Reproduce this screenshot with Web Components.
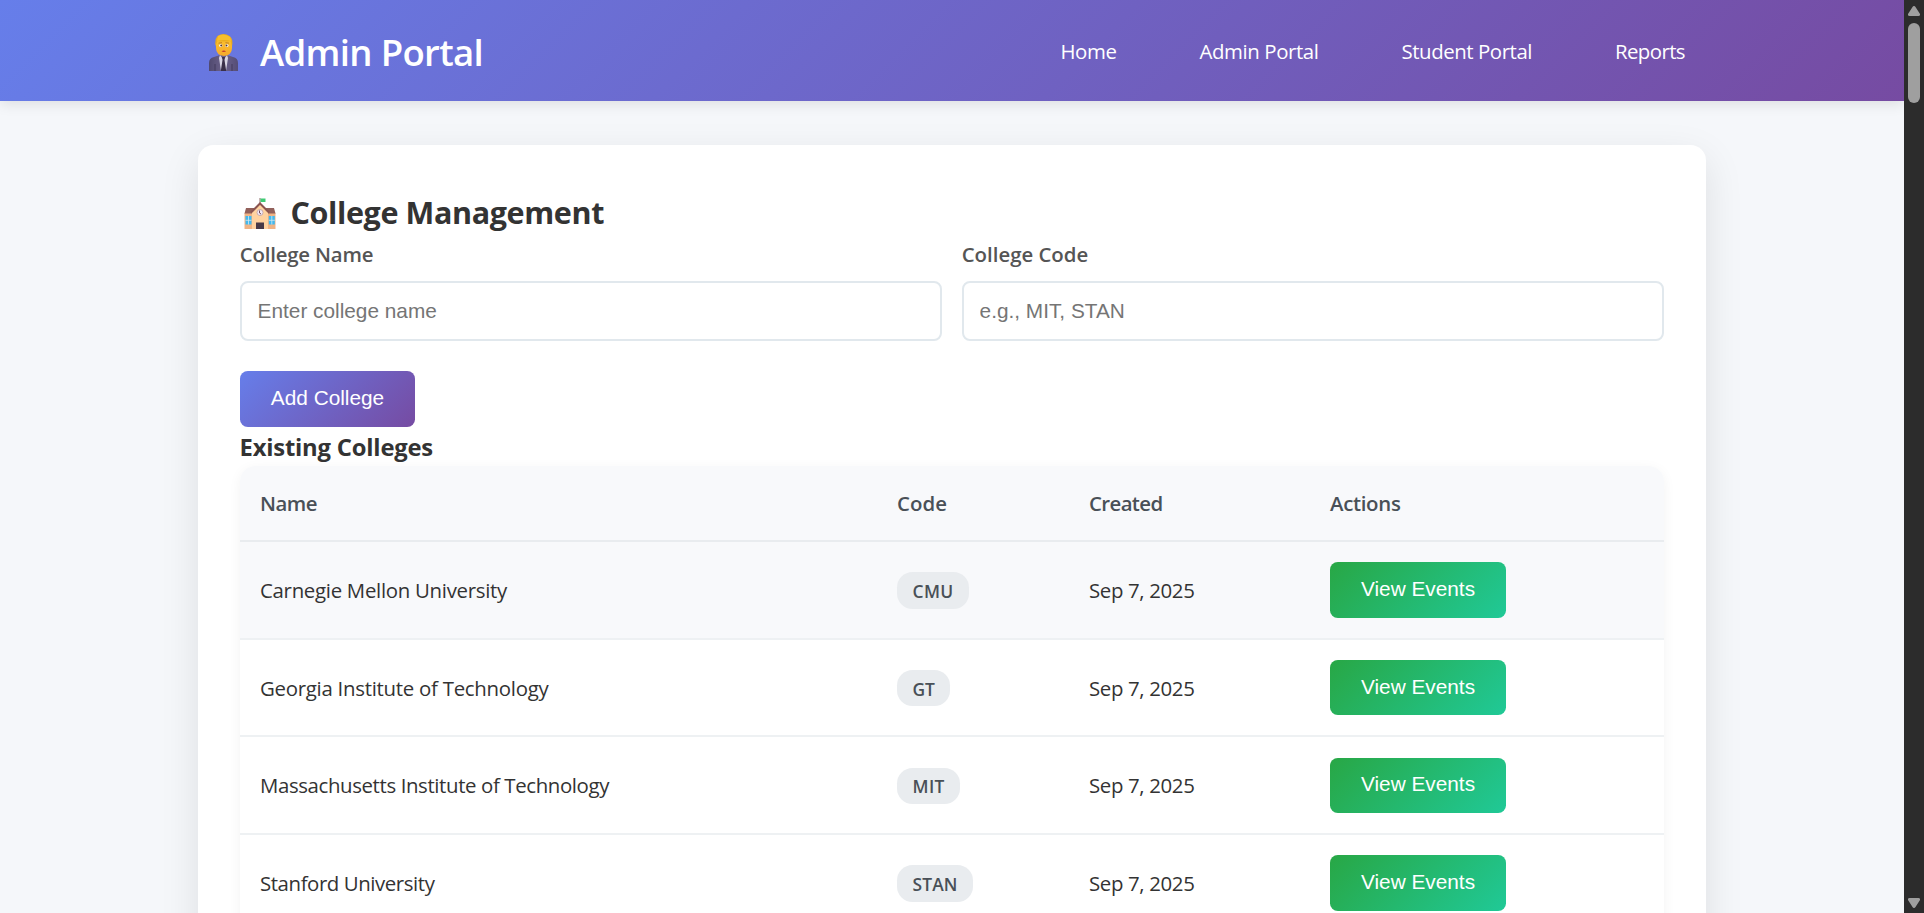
<!DOCTYPE html>
<html lang="en">
<head>
<meta charset="utf-8">
<title>Admin Portal</title>
<style>
html,body{margin:0;height:100%;overflow:hidden}
body{background:#f5f7fa;color:#333;font-family:"Open Sans","Noto Sans",sans-serif;font-size:20.400px}
</style>
</head>
<body>
<portal-app></portal-app>
<script>
const define=(name,html,init)=>{
  const t=document.createElement('template');t.innerHTML=html;
  customElements.define(name,class extends HTMLElement{
    connectedCallback(){
      if(this.shadowRoot)return;
      this.attachShadow({mode:'open'}).append(t.content.cloneNode(true));
      if(init)init.call(this,this.shadowRoot);
    }
  });
};

/* Text run tracked so that its advance equals the "w" attribute. */
define('fit-text','<style>:host{display:inline-block;white-space:pre;line-height:20px}</style><span><slot></slot></span>',function(r){
  const s=r.querySelector('span'),w=+this.getAttribute('w'),n=this.textContent.length;
  s.style.letterSpacing=((w-s.getBoundingClientRect().width)/n).toFixed(3)+'px';
});

define('official-icon',`<style>:host{display:block;width:29px;height:38px}svg{display:block}</style>
<svg width="29" height="38" viewBox="0 0 29 38">
<defs><linearGradient id="s" x2="1"><stop stop-color="#50496f"/><stop offset=".5" stop-color="#6c628c"/><stop offset="1" stop-color="#554d76"/></linearGradient>
<linearGradient id="f" y2="1" x2="0"><stop stop-color="#fdc62e"/><stop offset="1" stop-color="#f5a92c"/></linearGradient></defs>
<path d="M0 37V29q0-5 5-6l6-2h7l6 2q5 1 5 6v8z" fill="url(#s)"/>
<path d="M11 21l3.500 5 3.500-5 1 3-2 13h-5l-2-13z" fill="#d9d5e4"/>
<path d="M13 23h3l-.5 3 1.700 11h-5.400l1.700-11z" fill="#3a3049"/>
<path d="M6 30v7M23 30v7" stroke="#433b5c" stroke-width="1"/>
<path d="M7 9q0-6 8-7 8 1 8 7v5q0 7-8 8-8-1-8-8z" fill="url(#f)"/>
<path d="M6.500 12q-1-7 2-10 6-4 12 0 4 3 2.500 10l-1.500-5q-6 1-13 0z" fill="#e9ac20"/>
<path d="M9 2q6-3 12 1l1 4q-6-2-14 0z" fill="#f9bf2b"/>
<path d="M9.500 9.200l3.500-.6M16.500 8.600l3.500.6" stroke="#b8792a" stroke-width=".9"/>
<circle cx="11.800" cy="11.500" r="1.600" fill="#fff"/><circle cx="17.900" cy="11.500" r="1.600" fill="#fff"/>
<circle cx="12.200" cy="11.500" r="1" fill="#55362f"/><circle cx="17.500" cy="11.500" r="1" fill="#55362f"/>
<path d="M12.500 17.200q2.300-1.400 4.600 0-2.300 1.600-4.600 0" fill="#c0392b"/></svg>`);

define('school-icon',`<style>:host{display:block;width:32px;height:32px}svg{display:block}</style>
<svg width="32" height="32" viewBox="0 0 32 32">
<path d="M16 0v7" stroke="#8c6a68" stroke-width="1"/><path d="M16.500.5h5v3.500h-5z" fill="#3ecb74"/>
<path d="M.5 15h31v16H.5z" fill="#f0b384"/><path d="M2 10h28l1.500 5.500H.5z" fill="#92605a"/>
<path d="M8 14l8-8 8 8v17H8z" fill="#ffd2a0"/><path d="M7 14.500L16 5.500l9 9" fill="none" stroke="#8b5450" stroke-width="2"/>
<circle cx="16" cy="14.500" r="3" fill="#f3e9f5" stroke="#b596a0" stroke-width=".7"/><path d="M15.500 12.500v2.500l1.500 1" fill="none" stroke="#754b59"/>
<path d="M1.500 18h6v8.500h-6zM24.800 18h6v8.500h-6z" fill="#43b9ef"/><path d="M4.500 18v8.500M27.800 18v8.500M1.500 22.300h6M24.800 22.300h6" stroke="#d6e9ef" stroke-width=".8"/>
<path d="M12 24.500h8V31h-8z" fill="#483947"/></svg>`);

define('portal-nav',`<style>
:host{display:block;height:101px;box-sizing:border-box;padding:0 198px;background:linear-gradient(135deg,#667eea,#764ba2);box-shadow:0 3px 13px rgba(0,0,0,.1);color:#fff}
nav{display:flex;align-items:center;height:101px}
official-icon{margin:4px 22px 0 11px}
h1{margin:2px auto 0 0;font-size:36.600px;font-weight:600;line-height:36px}
div{display:flex;gap:83px;padding-right:21px}
</style><nav><official-icon></official-icon><h1><fit-text w="223">Admin Portal</fit-text></h1>
<div><fit-text w="56">Home</fit-text><fit-text w="119">Admin Portal</fit-text><fit-text w="130.500">Student Portal</fit-text><fit-text w="70">Reports</fit-text></div></nav>`);

define('form-field',`<style>
:host{display:block}label{display:block;height:34.600px;color:#555;font-weight:600;line-height:19px}
label ::slotted(*){margin:-2px 0 0 -.3px;vertical-align:top}
input{display:block;box-sizing:border-box;width:100%;height:60px;border:2px solid #e1e8ed;border-radius:8px;padding:0 15.600px;font:20.800px "Liberation Sans",Arial,sans-serif;background:#fff;outline:0}
input::placeholder{color:#757575;opacity:1}
</style><label><slot></slot></label><input>`,function(r){r.querySelector('input').placeholder=this.getAttribute('hint')});

define('action-button',`<style>
:host{display:inline-block}
button{display:block;box-sizing:border-box;height:55.200px;width:var(--w,176px);padding:0 0 2px;border:0;border-radius:7.800px;color:#fff;font:20.800px "Liberation Sans",Arial,sans-serif;background:linear-gradient(135deg,#28a745,#20c997)}
:host([primary]) button{background:linear-gradient(135deg,#667eea,#764ba2)}
</style><button><slot></slot></button>`);

define('code-badge',`<style>
:host{display:inline-block;box-sizing:border-box;height:36.400px;padding:8.500px 15.600px 0;border-radius:15.600px;background:#e9ecef;color:#495057;font-size:17.400px;font-weight:600;line-height:20px}
</style><slot></slot>`);

define('college-row',`<style>
:host{display:grid;grid-template-columns:637px 192px 241px 1fr;align-items:center;box-sizing:border-box;height:97.700px;padding-left:20px;border-bottom:2px solid #eef1f3;background:#fff}
:host([hover]){background:#f8f9fb}
.t{line-height:20px;padding-top:0}.b{padding-top:1.400px;display:flex}
</style><div class="t"><slot name="name"></slot></div><div class="b"><slot name="code"></slot></div><div class="t"><fit-text w="105.500">Sep 7, 2025</fit-text></div><action-button>View Events</action-button>`);

define('college-table',`<style>
:host{display:block;border-radius:15.600px;overflow:hidden;box-shadow:0 3px 13px rgba(0,0,0,.05);background:#fff}
header{display:grid;grid-template-columns:637px 192px 241px 1fr;align-items:center;box-sizing:border-box;height:76px;padding-left:20px;border-bottom:2px solid #e9ecef;background:#f8f9fb;color:#495057;font-weight:600;line-height:20px}
</style><header><fit-text w="57">Name</fit-text><fit-text w="50">Code</fit-text><fit-text w="73.500">Created</fit-text><fit-text w="70.500">Actions</fit-text></header><slot></slot>`);

define('portal-card',`<style>
:host{display:block;box-sizing:border-box;margin:44.400px 198px 0;height:1100px;padding:50.600px 42px 0;border-radius:15.600px;background:#fff;box-shadow:0 13px 39px rgba(0,0,0,.1)}
</style><slot></slot>`);

define('scroll-rail',`<style>
:host{display:flex;flex-direction:column;align-items:center;box-sizing:border-box;width:20px;height:913px;background:#2c2c2c;padding:6px 0 5px}
i{width:12px;height:80px;margin:7px 0 auto;border-radius:6px;background:#9f9f9f}svg{display:block}
</style><svg width="12" height="10"><path d="M6 0q1 0 1.500 1L12 8q.3 2-1.500 2h-9Q-.3 10 0 8L4.500 1Q5 0 6 0" fill="#9f9f9f"/></svg><i></i><svg width="12" height="10"><path d="M6 10q1 0 1.500-1L12 2q.3-2-1.500-2h-9Q-.3 0 0 2L4.500 9Q5 10 6 10" fill="#9f9f9f"/></svg>`);

define('portal-app',`<style>
:host{display:grid;grid-template-columns:1904px 20px;height:913px;overflow:hidden}
main{height:913px;overflow:hidden}
h2{display:flex;align-items:flex-start;margin:0;height:50px;font-size:30.500px;line-height:30px}
h2 school-icon{margin:2px 14.500px 0 4px}h2 fit-text{margin-top:6px}
.fields{display:grid;grid-template-columns:702px 702px;gap:20px;height:125.400px}
h3{margin:0;height:39.500px;font-size:23.800px;line-height:24px;padding-top:8px;box-sizing:border-box}
h3 fit-text{margin-left:-.5px}
.add{--w:175px;display:block}
</style>
<main><portal-nav></portal-nav><portal-card>
<h2><school-icon></school-icon><fit-text w="313.500">College Management</fit-text></h2>
<div class="fields"><form-field hint="Enter college name"><fit-text w="133.500">College Name</fit-text></form-field><form-field hint="e.g., MIT, STAN"><fit-text w="126.500">College Code</fit-text></form-field></div>
<action-button class="add" primary>Add College</action-button>
<h3><fit-text w="193.500">Existing Colleges</fit-text></h3>
<college-table>
<college-row hover><fit-text slot="name" w="247">Carnegie Mellon University</fit-text><code-badge slot="code"><fit-text w="41">CMU</fit-text></code-badge></college-row>
<college-row><fit-text slot="name" w="288.500">Georgia Institute of Technology</fit-text><code-badge slot="code"><fit-text w="22">GT</fit-text></code-badge></college-row>
<college-row><fit-text slot="name" w="349">Massachusetts Institute of Technology</fit-text><code-badge slot="code"><fit-text w="32">MIT</fit-text></code-badge></college-row>
<college-row><fit-text slot="name" w="174.500">Stanford University</fit-text><code-badge slot="code"><fit-text w="45">STAN</fit-text></code-badge></college-row>
</college-table>
</portal-card></main><scroll-rail></scroll-rail>`);
</script>
</body>
</html>
